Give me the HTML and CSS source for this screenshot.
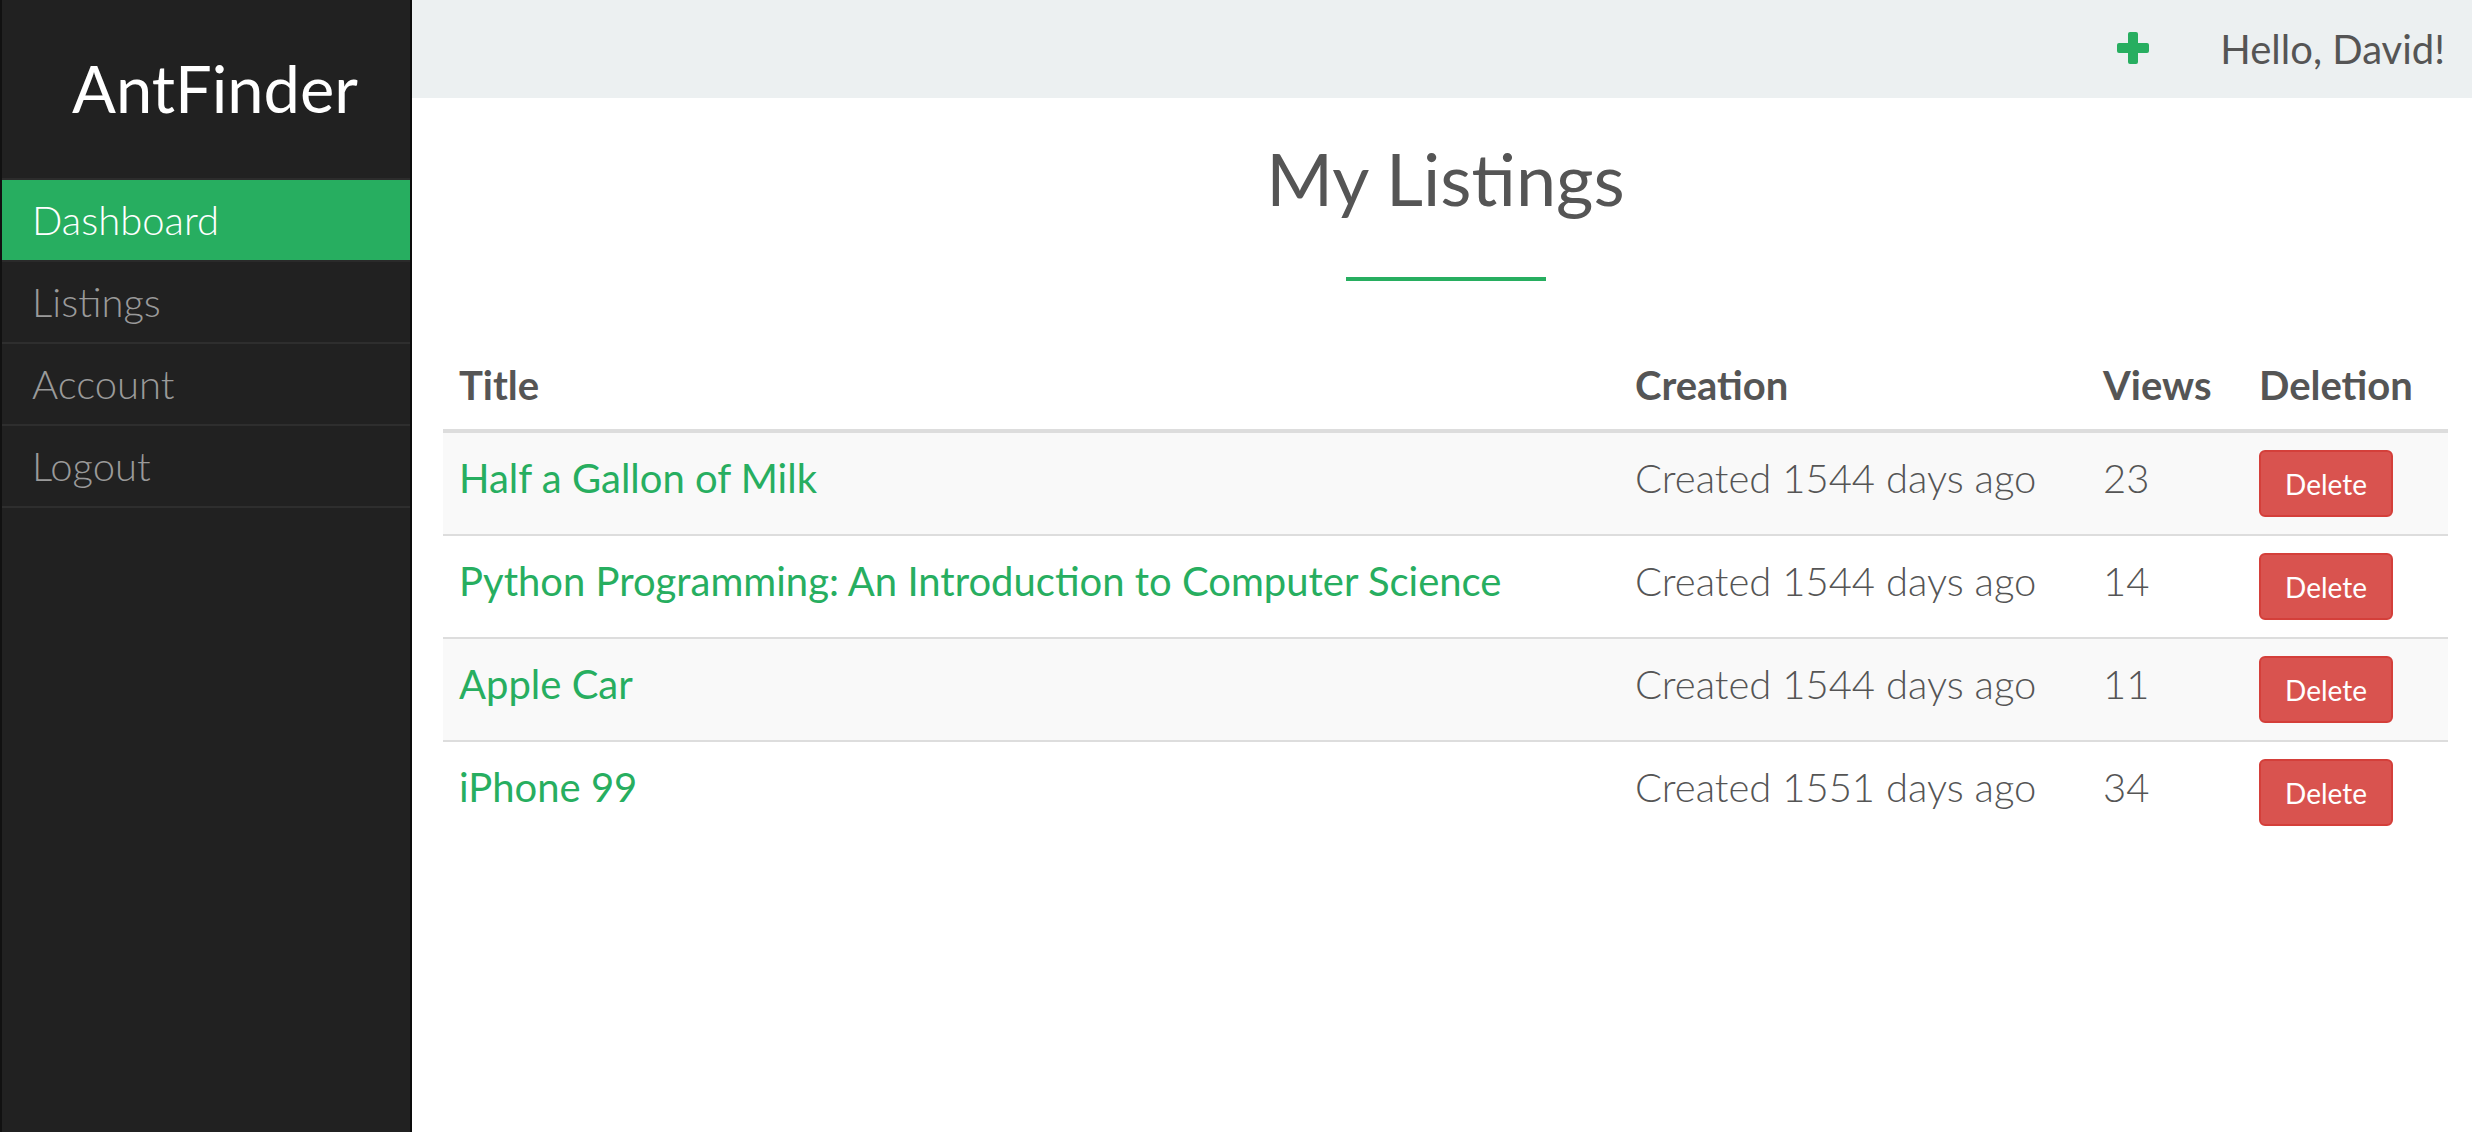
FILE: index.html
```html
<!DOCTYPE html>
<html lang="en">
<head>
<meta charset="utf-8">
<title>AntFinder - My Listings</title>
<link rel="stylesheet" href="styles.css">
</head>
<body>
<div class="app">
  <aside class="sidebar">
    <div class="brand">AntFinder</div>
    <nav class="nav">
      <a class="nav-item active" href="#">Dashboard</a>
      <a class="nav-item" href="#">Listings</a>
      <a class="nav-item" href="#">Account</a>
      <a class="nav-item" href="#">Logout</a>
    </nav>
  </aside>
  <div class="main">
    <header class="topbar">
      <a class="add" href="#" aria-label="Add listing">
        <svg width="32" height="32" viewBox="0 0 32 32"><rect x="11" y="0" width="10" height="32" rx="2" fill="#27ae60"/><rect x="0" y="11" width="32" height="10" rx="2" fill="#27ae60"/></svg>
      </a>
      <span class="hello">Hello, David!</span>
    </header>
    <section class="content">
      <h1 class="page-title">My Listings</h1>
      <div class="divider"></div>
      <table class="listings">
        <thead>
          <tr>
            <th class="col-title">Title</th>
            <th class="col-created">Creation</th>
            <th class="col-views">Views</th>
            <th class="col-delete">Deletion</th>
          </tr>
        </thead>
        <tbody>
          <tr class="odd">
            <td><a class="item-link" href="#">Half a Gallon of Milk</a></td>
            <td class="muted">Created 1544 days ago</td>
            <td class="muted">23</td>
            <td><button class="btn-delete">Delete</button></td>
          </tr>
          <tr>
            <td><a class="item-link" href="#">Python Programming: An Introduction to Computer Science</a></td>
            <td class="muted">Created 1544 days ago</td>
            <td class="muted">14</td>
            <td><button class="btn-delete">Delete</button></td>
          </tr>
          <tr class="odd">
            <td><a class="item-link" href="#">Apple Car</a></td>
            <td class="muted">Created 1544 days ago</td>
            <td class="muted">11</td>
            <td><button class="btn-delete">Delete</button></td>
          </tr>
          <tr>
            <td><a class="item-link" href="#">iPhone 99</a></td>
            <td class="muted">Created 1551 days ago</td>
            <td class="muted">34</td>
            <td><button class="btn-delete">Delete</button></td>
          </tr>
        </tbody>
      </table>
    </section>
  </div>
</div>
</body>
</html>
```

FILE: styles.css
```css
* { box-sizing: border-box; }
html, body { margin: 0; padding: 0; height: 100%; }
body {
  font-family: Lato, "Open Sans", "Liberation Sans", sans-serif;
  color: #555;
  background: #fff;
}
.app {
  display: flex;
  min-height: 100vh;
}
.sidebar {
  width: 412px;
  flex: 0 0 412px;
  background: #212121;
  border-left: 2px solid #111;
  border-right: 2px solid #0c0c0c;
}
.brand {
  height: 180px;
  display: flex;
  align-items: center;
  justify-content: center;
  padding-left: 18px;
  padding-bottom: 2px;
  color: #fff;
  font-size: 65px;
  font-weight: 400;
  border-bottom: 2px solid #2c2c2c;
}
.nav { display: flex; flex-direction: column; }
.nav-item {
  display: flex;
  align-items: center;
  height: 82px;
  padding-left: 30px;
  font-size: 40px;
  font-weight: 300;
  color: #9a9a9a;
  text-decoration: none;
  border-bottom: 2px solid #2e2e2e;
}
.nav-item.active {
  background: #27ae60;
  color: #fff;
  border-bottom-color: #2a2a2a;
}
.main {
  flex: 1;
  display: flex;
  flex-direction: column;
}
.topbar {
  height: 98px;
  background: #ecf0f1;
  display: flex;
  align-items: center;
  justify-content: flex-end;
  padding-right: 27px;
}
.add { display: flex; margin-right: 71px; margin-top: -2px; }
.hello {
  font-size: 40px;
  color: #555;
}
.content {
  padding: 0 24px 0 31px;
}
.page-title {
  margin: 35px 0 0;
  text-align: center;
  font-size: 72px;
  font-weight: 400;
  line-height: 90px;
  color: #555;
}
.divider {
  width: 200px;
  height: 4px;
  background: #27ae60;
  margin: 54px auto 0;
}
.listings {
  width: 100%;
  margin-top: 60px;
  border-collapse: collapse;
  font-size: 40px;
}
.listings th {
  text-align: left;
  font-weight: 700;
  color: #555;
  line-height: 48px;
  padding: 20px 22px 20px;
  border-bottom: 4px solid #ddd;
}
.listings th:first-child,
.listings td:first-child { padding-left: 16px; }
.col-created { width: 468px; }
.col-views { width: 156px; }
.col-delete { width: 211px; }
.listings td {
  vertical-align: top;
  line-height: 48px;
  padding: 21px 22px 17px;
}
.listings tbody tr + tr td { border-top: 2px solid #ddd; }
.listings tr.odd td { background: #f9f9f9; }
.item-link {
  color: #27ae60;
  text-decoration: none;
}
.muted { font-weight: 300; color: #555; }
.btn-delete {
  display: block;
  margin-top: -4px;
  width: 134px;
  height: 67px;
  font-family: inherit;
  font-size: 28px;
  color: #fff;
  background: #d9534f;
  border: 2px solid #d43f3a;
  border-radius: 6px;
  padding: 0;
  cursor: pointer;
}
```
